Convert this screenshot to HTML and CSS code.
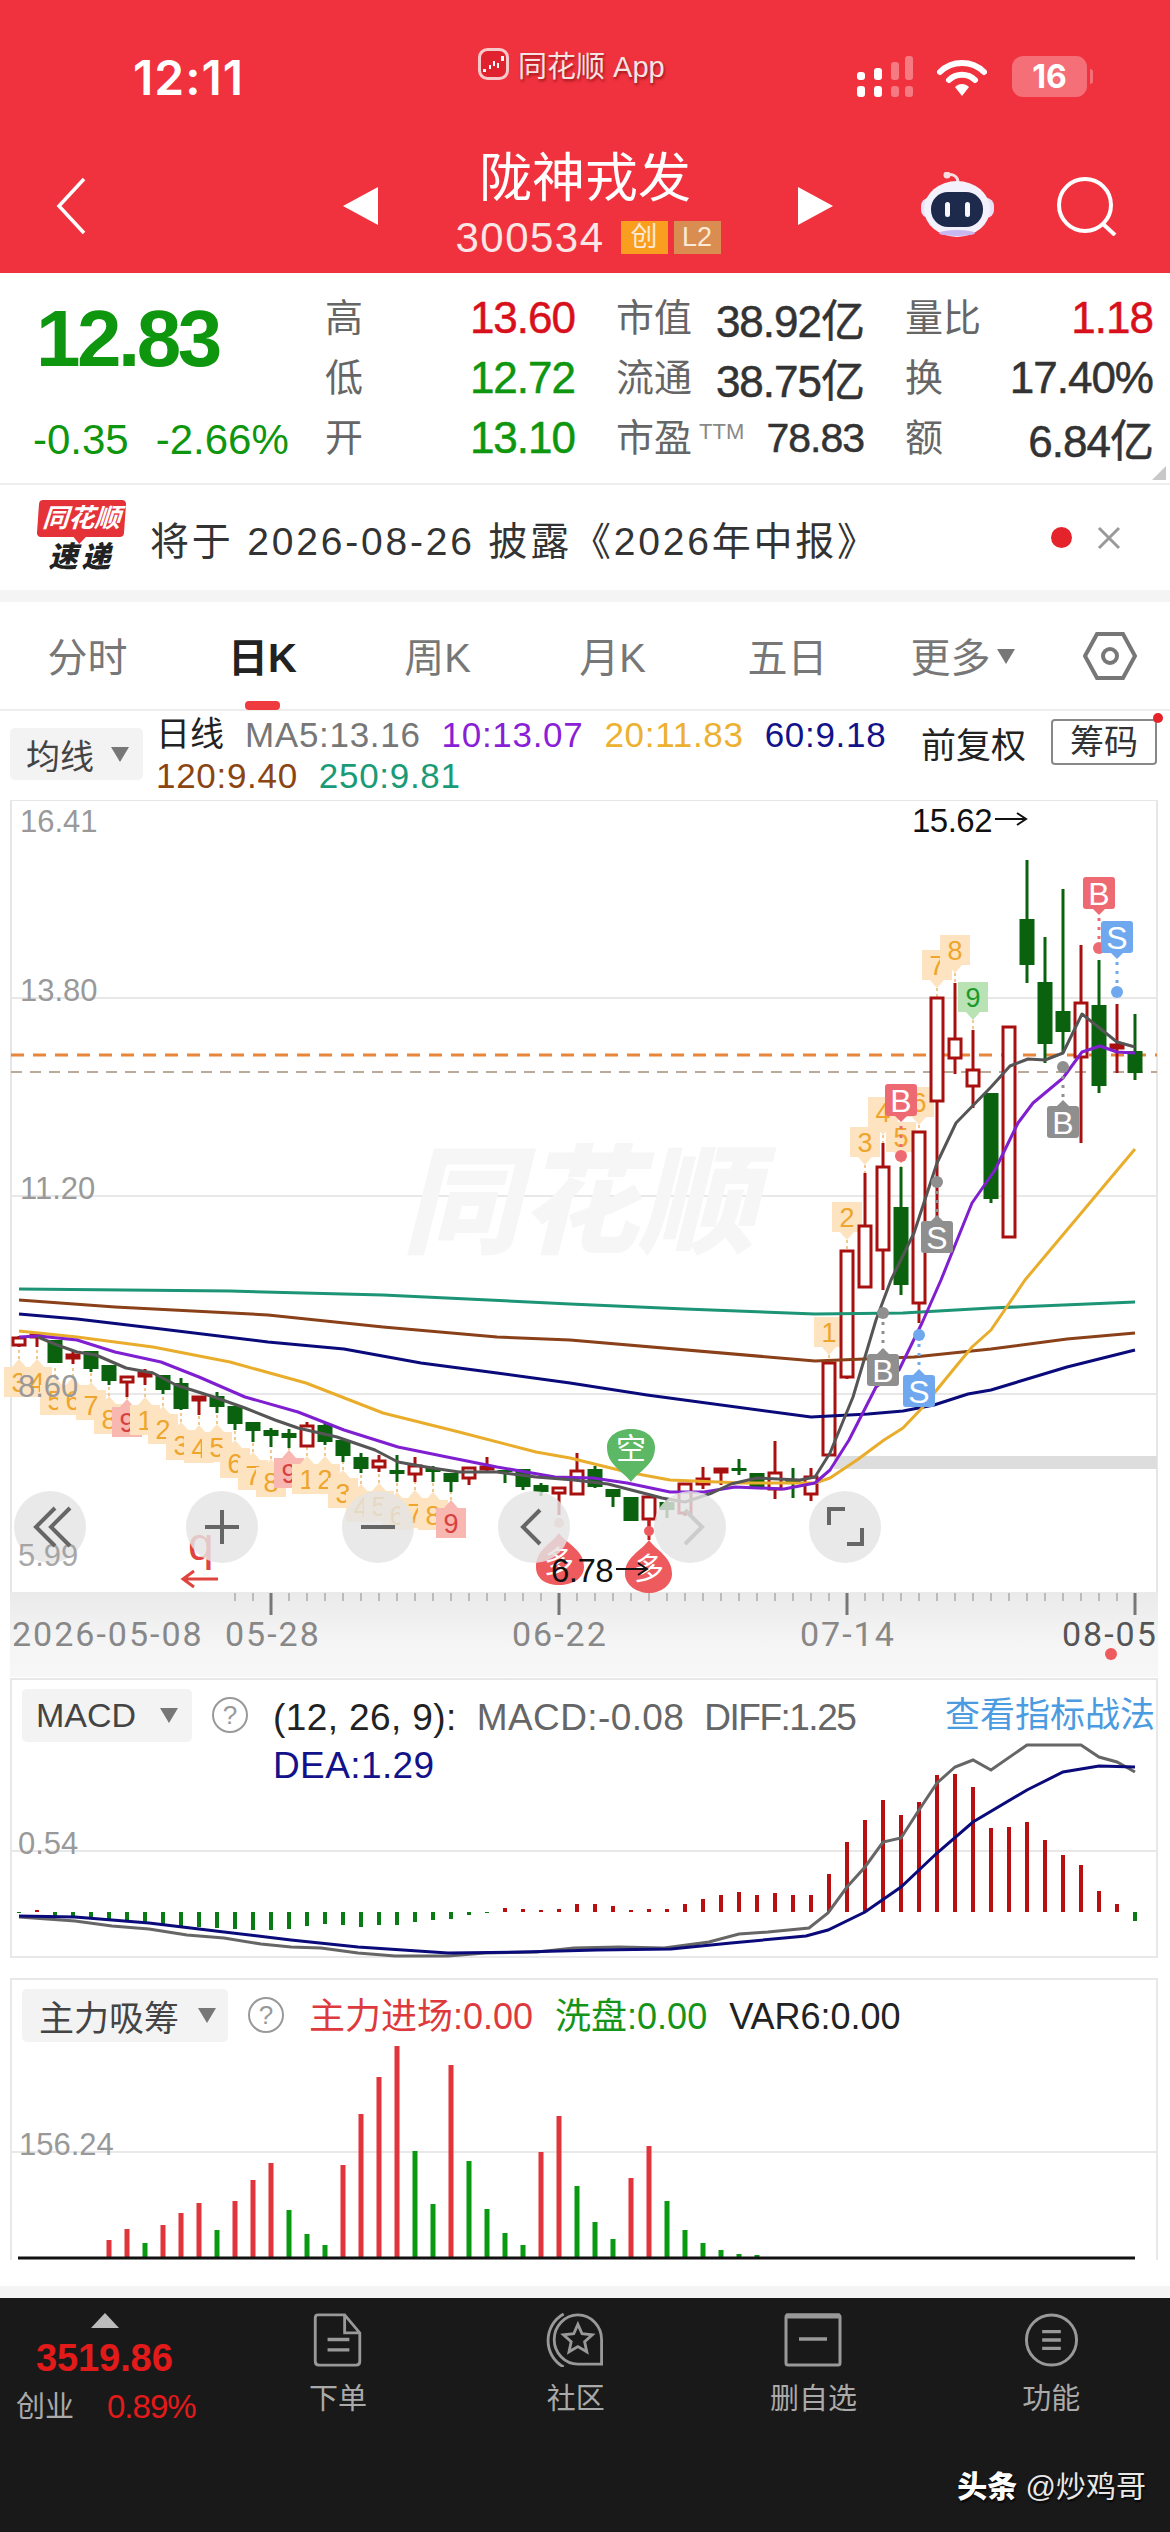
FILE: index.html
```html
<!DOCTYPE html>
<html lang="zh-CN">
<head>
    <meta charset="UTF-8">
    <meta name="viewport" content="width=device-width, initial-scale=1.0">
    <title>陇神戎发 300534</title>
    <link rel="stylesheet" href="styles.css">
</head>
<body>
    <header class="app-header">
        <div class="status-bar">
            <span class="status-time">12:11</span>
            <div class="status-app">
                <svg class="app-logo" width="31" height="32" viewBox="0 0 31 32">
                    <rect x="1.5" y="1.5" width="28" height="29" rx="8" fill="#E0212E" stroke="#F8C9C9" stroke-width="3"/>
                    <path d="M5 21h3v3H5zM11 17h2v4h-2zM15 13h2v5h-2zM19 15h2v5h-2zM23 8h3v5h-3z" fill="#fff"/>
                </svg>
                <span>同花顺 App</span>
            </div>
            <div class="status-icons">
                <svg width="62" height="42" viewBox="0 0 62 42">
                    <g fill="#fff">
                        <rect x="2" y="16" width="8" height="8" rx="3"/>
                        <rect x="2" y="30" width="8" height="11" rx="3"/>
                        <rect x="19" y="12" width="8" height="12" rx="3"/>
                        <rect x="19" y="30" width="8" height="11" rx="3"/>
                    </g>
                    <g fill="#fff" opacity="0.35">
                        <rect x="36" y="6" width="8" height="18" rx="3"/>
                        <rect x="36" y="30" width="8" height="11" rx="3"/>
                        <rect x="50" y="0" width="8" height="24" rx="3"/>
                        <rect x="50" y="30" width="8" height="11" rx="3"/>
                    </g>
                </svg>
                <svg class="wifi" width="50" height="38" viewBox="0 0 50 38">
                    <path d="M3 13C15 1 35 1 47 13" fill="none" stroke="#fff" stroke-width="6" stroke-linecap="round"/>
                    <path d="M12 21C19 14 31 14 38 21" fill="none" stroke="#fff" stroke-width="6" stroke-linecap="round"/>
                    <path d="M18 28C22 24 28 24 32 28L25 37Z" fill="#fff"/>
                </svg>
                <div class="battery"><span>16</span></div>
            </div>
        </div>
        <div class="nav-bar">
            <svg class="nav-back" width="32" height="58" viewBox="0 0 32 58">
                <path d="M29 2L4 29L29 56" fill="none" stroke="#fff" stroke-width="3.5"/>
            </svg>
            <div class="tri tri-left"></div>
            <div class="stock-title">
                <div class="stock-name">陇神戎发</div>
                <div class="stock-code">
                    <span>300534</span>
                    <em class="tag tag-chuang">创</em>
                    <em class="tag tag-l2">L2</em>
                </div>
            </div>
            <div class="tri tri-right"></div>
            <svg class="robot" width="75" height="66" viewBox="0 0 75 66">
                <path d="M27 3C33 1 38 5 38 10" fill="none" stroke="#F6DDE0" stroke-width="3"/>
                <circle cx="27" cy="3" r="3.5" fill="#F6DDE0"/>
                <rect x="1" y="26" width="73" height="20" rx="8" fill="#E8E2F8"/>
                <ellipse cx="37" cy="37" rx="33" ry="28" fill="#F3F1FB"/>
                <ellipse cx="37" cy="61" rx="18" ry="3" fill="#C9B8F0"/>
                <rect x="11" y="20" width="52" height="35" rx="17" fill="#1D2A4C"/>
                <rect x="25" y="30" width="5" height="15" rx="2.5" fill="#F8F6FF"/>
                <rect x="45" y="30" width="5" height="15" rx="2.5" fill="#F8F6FF"/>
            </svg>
            <svg class="search" width="64" height="60" viewBox="0 0 64 60">
                <circle cx="30" cy="29" r="26" fill="none" stroke="#fff" stroke-width="4"/>
                <path d="M48 48L60 59" stroke="#fff" stroke-width="4"/>
            </svg>
        </div>
    </header>

    <section class="quote">
        <div class="quote-price">
            <div class="price">12.83</div>
            <div class="price-change"><span>-0.35</span><span>-2.66%</span></div>
        </div>
        <div class="quote-grid">
            <div class="stat"><label>高</label><b class="up">13.60</b></div>
            <div class="stat"><label>低</label><b class="down">12.72</b></div>
            <div class="stat"><label>开</label><b class="down">13.10</b></div>
            <div class="stat"><label>市值</label><b>38.92亿</b></div>
            <div class="stat"><label>流通</label><b>38.75亿</b></div>
            <div class="stat"><label>市盈<sup>TTM</sup></label><b class="pe">78.83</b></div>
            <div class="stat"><label>量比</label><b class="up">1.18</b></div>
            <div class="stat"><label>换</label><b>17.40%</b></div>
            <div class="stat"><label>额</label><b>6.84亿</b></div>
        </div>
        <div class="quote-corner"></div>
    </section>

    <section class="notice">
        <div class="notice-logo">
            <div class="notice-bubble">同花顺</div>
            <div class="notice-sub">速递</div>
        </div>
        <p class="notice-text">将于 2026-08-26 披露《2026年中报》</p>
        <span class="notice-dot"></span>
        <svg class="notice-close" width="26" height="24" viewBox="0 0 26 24">
            <path d="M3 2L23 22M23 2L3 22" stroke="#999" stroke-width="3"/>
        </svg>
    </section>

    <nav class="tabs">
        <a>分时</a>
        <a class="active">日K</a>
        <a>周K</a>
        <a>月K</a>
        <a>五日</a>
        <a class="tab-more">更多<i class="caret"></i></a>
        <svg class="tab-hex" width="54" height="48" viewBox="0 0 54 48">
            <path d="M2 24L14 2H40L52 24L40 46H14Z" fill="none" stroke="#777" stroke-width="4"/>
            <circle cx="27" cy="24" r="7" fill="none" stroke="#777" stroke-width="4"/>
        </svg>
    </nav>

    <section class="legend-row">
        <div class="select-btn select-ma">均线<i class="caret"></i></div>
        <div class="ma-legend">
            <span class="ma-title">日线</span>
            <span class="c-ma5">MA5:13.16</span>
            <span class="c-ma10">10:13.07</span>
            <span class="c-ma20">20:11.83</span>
            <span class="c-ma60">60:9.18</span>
            <span class="c-ma120">120:9.40</span>
            <span class="c-ma250">250:9.81</span>
        </div>
        <span class="adjust">前复权</span>
        <span class="chips">筹码</span>
    </section>

    <svg class="kline" width="1170" height="877" viewBox="0 800 1170 877">
        <defs>
            <linearGradient id="band" x1="0" y1="0" x2="0" y2="1">
                <stop offset="0" stop-color="#EAEAEA"/>
                <stop offset="0.6" stop-color="#F5F5F5"/>
                <stop offset="1" stop-color="#F7F7F7"/>
            </linearGradient>
        </defs>
        <rect x="0" y="800" width="1170" height="877" fill="#fff"/>
        <rect x="10" y="1592" width="1148" height="85" fill="url(#band)"/>
        <path class="frame" d="M11 1592V800H1157V1592"/>
        <path class="grid-line" d="M11 998H1157M11 1196H1157M11 1394H1157"/>
        <text class="watermark" x="402" y="1244">同花顺</text>
        <rect class="limit-bar" x="834" y="1456" width="323" height="13"/>

        <g id="badges"></g>
        <path class="price-now" d="M11 1055H1157"/>
        <path class="price-prev" d="M11 1072H1157"/>
        <g id="candles"></g>

        <polyline class="ma ma250" points="19,1289 230,1291 383,1295 570,1304 685,1309 815,1314 903,1313 991,1308 1135,1302"/>
        <polyline class="ma ma120" points="19,1300 115,1307 268,1315 383,1327 497,1337 570,1340 815,1361 914,1357 991,1349 1067,1339 1135,1333"/>
        <polyline class="ma ma60" points="19,1314 77,1319 153,1328 268,1342 344,1349 421,1363 497,1373 570,1383 647,1395 811,1417 868,1414 903,1411 934,1405 968,1394 991,1390 1067,1367 1135,1350"/>
        <polyline class="ma ma20" points="19,1331 77,1337 153,1347 230,1362 306,1383 383,1413 459,1432 536,1452 570,1458 627,1472 670,1480 742,1483 815,1483 830,1478 857,1460 884,1440 903,1428 922,1408 953,1370 972,1347 991,1330 1025,1280 1135,1149"/>
        <polyline class="ma ma10" points="19,1337 38,1336 77,1340 115,1352 161,1362 199,1377 245,1397 298,1412 344,1430 398,1447 452,1458 497,1467 555,1477 593,1478 627,1483 670,1492 704,1492 735,1487 784,1489 815,1483 830,1470 849,1440 876,1387 899,1370 922,1323 941,1280 972,1203 995,1170 1018,1123 1033,1103 1063,1078 1082,1052 1100,1046 1117,1052 1135,1053"/>
        <polyline class="ma ma5" points="38,1337 57,1345 77,1352 96,1355 126,1368 153,1373 176,1385 214,1397 245,1408 275,1420 298,1428 337,1437 375,1450 398,1462 432,1468 459,1472 497,1472 536,1477 574,1480 608,1484 643,1493 662,1498 685,1502 712,1493 731,1484 757,1478 800,1480 815,1477 830,1453 853,1397 876,1320 891,1280 914,1233 937,1163 956,1123 991,1087 1010,1066 1028,1059 1045,1060 1063,1053 1082,1014 1117,1042 1135,1047"/>

        <g id="marks"></g>

        <path class="drop drop-green" d="M631 1482C622 1470 607 1465 607 1447C607 1436 618 1429 631 1429C644 1429 655 1436 655 1447C655 1465 640 1470 631 1482Z"/>
        <text class="drop-text" x="631" y="1459">空</text>
        <path class="drop drop-red" d="M559 1533C568 1545 584 1550 584 1567C584 1578 573 1585 559 1585C545 1585 536 1578 536 1567C536 1550 550 1545 559 1533Z"/>
        <text class="drop-text" x="559" y="1572">多</text>
        <path class="drop drop-red" d="M649 1540C658 1552 672 1557 672 1574C672 1585 661 1593 649 1593C637 1593 625 1585 625 1574C625 1557 640 1552 649 1540Z"/>
        <text class="drop-text" x="649" y="1579">多</text>
        <path class="drop-stem" d="M649 1519V1540"/>
        <circle class="dot-red" cx="649" cy="1531" r="5"/>
        <circle class="dot-pink" cx="559" cy="1523" r="5"/>

        <text class="axis-price" x="20" y="832">16.41</text>
        <text class="axis-price" x="20" y="1001">13.80</text>
        <text class="axis-price" x="20" y="1199">11.20</text>
        <text class="axis-price" x="18" y="1397">8.60</text>

        <text class="extreme" x="912" y="832">15.62</text>
        <path class="extreme-arrow" d="M995 819H1025M1017 813L1026 819L1017 825"/>
        <text class="extreme" x="551" y="1582">6.78</text>
        <path class="extreme-arrow" d="M616 1569H646M638 1563L647 1569L638 1575"/>

        <text class="flip-mark" x="188" y="1560">q</text>
        <path class="flip-arrow" d="M183 1579H218M194 1571L183 1579L194 1587"/>

        <circle class="zoom-btn" cx="50" cy="1527" r="36"/>
        <text class="axis-price axis-faded" x="18" y="1566">5.99</text>
        <path class="zoom-icon" d="M55 1508L36 1527L55 1546M70 1508L51 1527L70 1546"/>
        <circle class="zoom-btn" cx="222" cy="1527" r="36"/>
        <path class="zoom-icon" d="M205 1527H239M222 1510V1544"/>
        <circle class="zoom-btn" cx="378" cy="1527" r="36"/>
        <path class="zoom-icon" d="M361 1527H395"/>
        <circle class="zoom-btn" cx="534" cy="1527" r="36"/>
        <path class="zoom-icon" d="M540 1510L523 1527L540 1544"/>
        <circle class="zoom-btn" cx="690" cy="1527" r="36"/>
        <path class="zoom-icon zoom-off" d="M685 1510L702 1527L685 1544"/>
        <circle class="zoom-btn" cx="845" cy="1527" r="36"/>
        <path class="zoom-icon" d="M845 1509H829V1525M862 1528V1544H847"/>

        <g id="ticks"></g>
        <text class="axis-date" x="12" y="1646">2026-05-08</text>
        <text class="axis-date" x="225" y="1646">05-28</text>
        <text class="axis-date" x="512" y="1646">06-22</text>
        <text class="axis-date" x="800" y="1646">07-14</text>
        <text class="axis-date axis-date-last" x="1062" y="1646">08-05</text>
        <circle class="dot-red" cx="1111" cy="1654" r="6"/>
    </svg>

    <section class="panel panel-macd">
        <svg class="panel-chart" width="1148" height="280" viewBox="10 1678 1148 280">
            <path class="grid-line" d="M10 1851H1158"/>
            <text class="axis-price" x="18" y="1854">0.54</text>
            <g id="macd-bars"></g>
            <polyline class="line-diff" points="19,1917 75,1921 112,1926 149,1929 187,1935 224,1938 261,1944 291,1947 321,1948 358,1953 395,1956 448,1956 485,1953 537,1952 574,1948 619,1947 664,1948 709,1942 739,1934 768,1932 809,1928 828,1913 847,1887 865,1867 883,1842 901,1838 919,1810 937,1783 955,1767 973,1760 991,1770 1027,1745 1081,1745 1099,1757 1117,1762 1135,1772"/>
            <polyline class="line-dea" points="19,1916 75,1917 149,1923 224,1932 291,1940 358,1947 448,1953 522,1952 597,1950 671,1949 731,1943 806,1936 828,1930 865,1912 901,1887 937,1853 973,1822 1027,1790 1063,1772 1099,1766 1135,1767"/>
        </svg>
        <div class="panel-head">
            <div class="select-btn select-macd">MACD<i class="caret"></i></div>
            <span class="help">?</span>
            <div class="panel-legend legend-macd">
                <span class="c-black">(12, 26, 9):</span>
                <span class="c-gray">MACD:-0.08</span>
                <span class="c-gray legend-diff">DIFF:1.25</span>
                <span class="c-ma60">DEA:1.29</span>
            </div>
            <a class="panel-link">查看指标战法</a>
        </div>
    </section>

    <section class="panel panel-main">
        <svg class="panel-chart" width="1148" height="282" viewBox="10 1978 1148 282">
            <path class="grid-line" d="M10 2152H1158"/>
            <text class="axis-price" x="19" y="2155">156.24</text>
            <g id="flow-bars"></g>
            <path class="flow-base" d="M18 2258H1135"/>
        </svg>
        <div class="panel-head">
            <div class="select-btn select-main">主力吸筹<i class="caret"></i></div>
            <span class="help">?</span>
            <div class="panel-legend legend-main">
                <span class="c-flow-red">主力进场:0.00</span>
                <span class="c-flow-green">洗盘:0.00</span>
                <span class="c-black">VAR6:0.00</span>
            </div>
        </div>
    </section>

    <div class="page-gap"></div>

    <footer class="bottom-bar">
        <div class="bottom-nav">
            <div class="index-box">
                <i class="index-arrow"></i>
                <div class="index-value">3519.86</div>
                <div class="index-row"><span>创业</span><b>0.89%</b></div>
            </div>
            <a class="nav-item">
                <svg width="52" height="57" viewBox="0 0 52 57">
                    <path d="M5 2H33L49 21V51Q49 55 45 55H6Q2 55 2 51V5Q2 2 5 2ZM33 2V21H49" fill="none" stroke="#999" stroke-width="3"/>
                    <path d="M15 28H38M15 39H38" stroke="#999" stroke-width="3.5"/>
                </svg>
                <span>下单</span>
            </a>
            <a class="nav-item">
                <svg width="62" height="57" viewBox="0 0 62 57">
                    <path d="M18 1C-4 13 -4 45 18 57" fill="none" stroke="#999" stroke-width="3"/>
                    <path d="M58 54H33C19 54 8 42 8 28C8 14 19 2 33 2C47 2 58 14 58 28Z" fill="none" stroke="#999" stroke-width="3"/>
                    <path d="M33 12L37.4 21.9L48.2 23L40.1 30.3L42.4 41L33 35.5L23.6 41L25.9 30.3L17.8 23L28.6 21.9Z" fill="none" stroke="#999" stroke-width="3"/>
                </svg>
                <span>社区</span>
            </a>
            <a class="nav-item">
                <svg width="58" height="54" viewBox="0 0 58 54">
                    <rect x="2" y="2" width="54" height="50" rx="2" fill="none" stroke="#999" stroke-width="3"/>
                    <path d="M2 3H56" stroke="#999" stroke-width="5"/>
                    <path d="M15 26H43" stroke="#999" stroke-width="3.5"/>
                </svg>
                <span>删自选</span>
            </a>
            <a class="nav-item">
                <svg width="55" height="55" viewBox="0 0 55 55">
                    <circle cx="27.5" cy="27.5" r="25.5" fill="none" stroke="#999" stroke-width="3"/>
                    <path d="M18 19H37M18 27.5H37M18 36H37" stroke="#999" stroke-width="3.5"/>
                </svg>
                <span>功能</span>
            </a>
        </div>
        <div class="brand"><b>头条</b> @炒鸡哥</div>
    </footer>

    <script src="chart.js"></script>
</body>
</html>
```

FILE: styles.css
```css
* {
    box-sizing: border-box;
}

body {
    margin: 0;
    width: 1170px;
    height: 2532px;
    overflow: hidden;
    background-color: #FFFFFF;
    color: #333333;
    font-family: 'Liberation Sans', 'Noto Sans CJK SC', sans-serif;
}

svg {
    display: block;
}

i, em {
    font-style: normal;
}

/* header */
.app-header {
    height: 273px;
    background-color: #F0323E;
    color: #FFFFFF;
}

.status-bar {
    height: 125px;
    padding-left: 133px;
    display: grid;
    grid-template-columns: 345px 377px 1fr;
}

.status-time {
    font-family: Inter, sans-serif;
    font-size: 48px;
    font-weight: 600;
    letter-spacing: 1px;
    line-height: 56px;
    margin-top: 50px;
}

.status-app {
    display: flex;
    gap: 9px;
    margin-top: 48px;
    height: 32px;
    align-items: center;
    font-size: 29px;
    color: #F4E4E4;
    text-shadow: 1px 2px 3px rgba(90, 0, 0, 0.6);
}

.status-icons {
    display: flex;
    align-items: flex-start;
    margin-top: 56px;
}

.wifi {
    margin-left: 20px;
    margin-top: 3px;
}

.battery {
    position: relative;
    width: 75px;
    height: 41px;
    margin-left: 25px;
    border-radius: 11px;
    background-color: rgba(255, 255, 255, 0.3);
    text-align: center;
    font-family: Inter, sans-serif;
    font-size: 32px;
    font-weight: 700;
    line-height: 41px;
}

.battery::after {
    content: '';
    position: absolute;
    right: -6px;
    top: 13px;
    width: 3px;
    height: 15px;
    border-radius: 0 3px 3px 0;
    background-color: rgba(255, 255, 255, 0.3);
}

.nav-bar {
    height: 148px;
    padding: 14px 0 0 55px;
    display: flex;
    align-items: center;
}

.tri {
    width: 0;
    height: 0;
    border-top: 19px solid transparent;
    border-bottom: 19px solid transparent;
}

.tri-left {
    margin-left: 256px;
    border-right: 35px solid #FFFFFF;
}

.tri-right {
    border-left: 35px solid #FFFFFF;
}

.stock-title {
    width: 420px;
    text-align: center;
    margin-top: -14px;
}

.stock-name {
    font-size: 53px;
    line-height: 72px;
    margin-left: -6px;
}

.stock-code {
    display: flex;
    justify-content: center;
    align-items: center;
    gap: 6px;
    margin-top: 5px;
    color: #FBE6E6;
    font-size: 42px;
    letter-spacing: 1.5px;
    line-height: 36px;
}

.stock-code span {
    margin-right: 10px;
}

.tag {
    width: 47px;
    height: 33px;
    color: #FCE9D6;
    font-size: 27px;
    line-height: 33px;
    letter-spacing: 0;
}

.tag-chuang {
    background-color: #F99E1E;
}

.tag-l2 {
    background-color: #DA8D50;
}

.robot {
    margin-left: 87px;
    margin-top: -2px;
}

.search {
    margin-left: 60px;
}

/* quote */
.quote {
    position: relative;
    height: 210px;
    padding: 15px 0 0 33px;
    display: flex;
}

.quote-price {
    width: 292px;
}

.price {
    margin-left: 3px;
    color: #0F960F;
    font-size: 80px;
    font-weight: 700;
    letter-spacing: -3.5px;
    line-height: 80px;
    margin-top: 11px;
}

.price-change {
    display: flex;
    gap: 27px;
    margin-top: 38px;
    color: #0F960F;
    font-size: 42px;
    line-height: 46px;
}

.quote-grid {
    display: grid;
    grid-template-columns: 250px 248px 248px;
    grid-template-rows: repeat(3, 60px);
    grid-auto-flow: column;
    column-gap: 41px;
}

.stat {
    display: flex;
    justify-content: space-between;
    align-items: center;
}

.stat label {
    margin-top: -7px;
    color: #666666;
    font-size: 38px;
}

.stat sup {
    margin-left: 7px;
    font-size: 22px;
    vertical-align: 12px;
    line-height: 0;
    color: #888888;
}

.stat b {
    color: #333333;
    font-size: 44px;
    font-weight: 400;
    letter-spacing: -1px;
    -webkit-text-stroke: 0.5px currentColor;
}

.stat b.pe {
    font-size: 41px;
}

.stat b.up {
    color: #D8101C;
}

.stat b.down {
    color: #0F960F;
}

.quote-corner {
    position: absolute;
    right: 4px;
    bottom: 3px;
    width: 0;
    height: 0;
    border-bottom: 14px solid #C8C8C8;
    border-left: 14px solid transparent;
}

/* notice */
.notice {
    height: 107px;
    padding: 0 48px 0 38px;
    border-top: 2px solid #EEEEEE;
    display: flex;
    align-items: center;
}

.notice-logo {
    width: 87px;
    text-align: center;
}

.notice-bubble {
    position: relative;
    height: 37px;
    background-color: #E53238;
    border-radius: 4px;
    color: #FFFFFF;
    font-size: 26px;
    font-weight: 700;
    font-style: italic;
    line-height: 37px;
    transform: skewX(-4deg);
}

.notice-bubble::after {
    content: '';
    position: absolute;
    left: 36px;
    bottom: -7px;
    border-top: 8px solid #E53238;
    border-left: 7px solid transparent;
    border-right: 7px solid transparent;
}

.notice-sub {
    color: #222222;
    font-size: 29px;
    font-weight: 900;
    font-style: italic;
    letter-spacing: 4px;
    line-height: 36px;
    margin-top: 2px;
}

.notice-text {
    flex: 1;
    margin: 0 0 0 25px;
    color: #333333;
    font-size: 39px;
    letter-spacing: 2.8px;
    white-space: nowrap;
}

.notice-dot {
    width: 21px;
    height: 21px;
    border-radius: 50%;
    background-color: #E4232B;
}

.notice-close {
    margin-left: 24px;
}

/* tabs */
.tabs {
    height: 121px;
    border-top: 12px solid #F4F4F4;
    border-bottom: 2px solid #EEEEEE;
    display: flex;
    align-items: center;
}

.tabs a {
    position: relative;
    width: 175px;
    height: 107px;
    padding-top: 28px;
    text-align: center;
    color: #777777;
    font-size: 40px;
    line-height: 56px;
}

.tabs a.active {
    color: #222222;
    font-weight: 700;
}

.tabs a.active::after {
    content: '';
    position: absolute;
    left: 70px;
    bottom: -1px;
    width: 35px;
    height: 9px;
    border-radius: 4px;
    background-color: #EF3B3F;
}

.tab-hex {
    margin-left: 33px;
    margin-top: 1px;
}

.caret {
    display: inline-block;
    width: 0;
    height: 0;
    border-top: 15px solid #777777;
    border-left: 9px solid transparent;
    border-right: 9px solid transparent;
}

.tab-more .caret {
    margin-left: 6px;
    vertical-align: 8px;
}

/* legend */
.legend-row {
    position: relative;
    height: 89px;
    display: flex;
    align-items: flex-start;
}

.select-btn {
    background-color: #F3F3F3;
    border-radius: 5px;
    color: #444444;
    display: flex;
    align-items: center;
    justify-content: space-between;
    font-size: 34px;
}

.select-ma {
    width: 133px;
    height: 52px;
    margin: 17px 0 0 10px;
    padding: 0 14px 0 16px;
}

.ma-legend {
    width: 745px;
    margin-left: 13px;
    display: flex;
    flex-wrap: wrap;
    column-gap: 21px;
    font-size: 35px;
    letter-spacing: 0.7px;
    line-height: 41px;
    padding-top: 3px;
}

.ma-title {
    color: #222222;
    font-size: 34px;
    letter-spacing: 0;
}

.c-ma5 { color: #777777; }
.c-ma10 { color: #8A1FD8; }
.c-ma20 { color: #EDB02F; }
.c-ma60 { color: #12128A; }
.c-ma120 { color: #8B4513; }
.c-ma250 { color: #1A9B78; }
.c-black { color: #222222; }
.c-gray { color: #666666; }
.c-flow-red { color: #DD3A3E; }
.c-flow-green { color: #16941A; }

.adjust {
    margin: 13px 0 0 20px;
    color: #222222;
    font-size: 35px;
    line-height: 44px;
}

.chips {
    width: 106px;
    height: 46px;
    margin: 8px 0 0 25px;
    border: 2px solid #888888;
    border-radius: 4px;
    text-align: center;
    color: #333333;
    font-size: 34px;
    line-height: 42px;
}

.chips::after {
    content: '';
    position: absolute;
    right: 7px;
    top: 2px;
    width: 10px;
    height: 10px;
    border-radius: 50%;
    background-color: #E4232B;
}

/* k line chart */
.frame {
    fill: none;
    stroke: #E6E6E6;
    stroke-width: 2;
}

.grid-line {
    fill: none;
    stroke: #E8E8E8;
    stroke-width: 2;
}

.watermark {
    fill: #F6F6F6;
    font-size: 118px;
    font-weight: 900;
    font-style: italic;
}

.limit-bar {
    fill: #DDDDDD;
}

.price-now {
    fill: none;
    stroke: #E8863A;
    stroke-width: 3;
    stroke-dasharray: 13 9;
}

.price-prev {
    fill: none;
    stroke: #BBAA9A;
    stroke-width: 2;
    stroke-dasharray: 11 8;
}

.ma {
    fill: none;
    stroke-width: 3;
    stroke-linejoin: round;
}

.ma5 { stroke: #555555; }
.ma10 { stroke: #7F1FD0; }
.ma20 { stroke: #E9AD2B; }
.ma60 { stroke: #0A0A7A; }
.ma120 { stroke: #8A4018; }
.ma250 { stroke: #1C9475; }

.wick-red { stroke: #A81010; stroke-width: 3; }
.wick-green { stroke: #0A620F; stroke-width: 3; }
.body-red { fill: #FFFFFF; stroke: #A81010; stroke-width: 3; }
.body-green { fill: #0A620F; }

.badge-orange { fill: #FDE3C0; }
.badge-pink { fill: #F8B7B0; }
.badge-green { fill: #B9E2B5; }

.badge-text {
    text-anchor: middle;
    font-size: 27px;
    fill: #EFA52C;
}

.badge-text-pink { fill: #D8403F; }
.badge-text-green { fill: #1A9A2A; }

.badge-link {
    fill: none;
    stroke: #EFC98F;
    stroke-width: 2;
    stroke-dasharray: 3 3;
}

.mark-text {
    text-anchor: middle;
    fill: #FFFFFF;
    font-size: 32px;
}

.mark-link {
    fill: none;
    stroke-width: 3;
    stroke-dasharray: 3 6;
}

.drop-green { fill: #5DB866; }
.drop-red { fill: #EE5B5F; }
.drop-stem { stroke: #C21A1A; stroke-width: 3; }
.dot-red { fill: #EE5B5F; }
.dot-pink { fill: #F4B8B8; }

.drop-text {
    text-anchor: middle;
    fill: #FFFFFF;
    font-size: 30px;
}

.axis-price {
    fill: #999999;
    font-size: 31px;
}

.axis-faded {
    opacity: 0.85;
}

.extreme {
    fill: #111111;
    font-size: 33px;
    letter-spacing: -0.5px;
}

.extreme-arrow {
    fill: none;
    stroke: #111111;
    stroke-width: 2;
}

.flip-mark {
    fill: #E0443F;
    font-size: 46px;
}

.flip-arrow {
    fill: none;
    stroke: #E0443F;
    stroke-width: 3;
}

.zoom-btn {
    fill: rgba(228, 228, 228, 0.82);
}

.zoom-icon {
    fill: none;
    stroke: #666666;
    stroke-width: 4;
}

.zoom-off {
    stroke: #CCCCCC;
}

.tick {
    stroke: #BBBBBB;
    stroke-width: 2;
}

.tick-major {
    stroke: #777777;
    stroke-width: 3;
}

.axis-date {
    fill: #888888;
    font-family: Roboto, sans-serif;
    font-size: 34px;
    letter-spacing: 2px;
}

.axis-date-last {
    fill: #555555;
}

/* sub panels */
.panel {
    position: relative;
    width: 1148px;
    margin-left: 10px;
    border: 2px solid #E8E8E8;
}

.panel-macd {
    height: 280px;
    margin-top: 1px;
}

.panel-main {
    height: 282px;
    margin-top: 20px;
    border-bottom: none;
}

.panel-chart {
    position: absolute;
    left: -2px;
    top: -2px;
}

.panel-head {
    position: relative;
    display: flex;
    align-items: flex-start;
    padding: 9px 0 0 10px;
}

.select-macd {
    width: 170px;
    height: 53px;
    padding: 0 14px;
    font-size: 34px;
}

.select-main {
    width: 206px;
    height: 53px;
    padding: 0 12px 0 17px;
    font-size: 35px;
}

.help {
    width: 36px;
    height: 36px;
    margin: 8px 0 0 20px;
    border: 2px solid #999999;
    border-radius: 50%;
    text-align: center;
    color: #999999;
    font-size: 26px;
    line-height: 32px;
}

.panel-legend {
    display: flex;
    flex-wrap: wrap;
    column-gap: 20px;
}

.legend-macd {
    width: 668px;
    margin: 5px 0 0 25px;
    font-size: 37px;
    letter-spacing: 0.4px;
    line-height: 48px;
}

.legend-diff {
    letter-spacing: -1.5px;
}

.legend-main {
    margin: 7px 0 0 25px;
    font-size: 36px;
    line-height: 42px;
    column-gap: 22px;
}

.panel-link {
    margin: 5px 0 0 4px;
    color: #4A9BE0;
    font-size: 35px;
    line-height: 42px;
    white-space: nowrap;
}

.line-diff {
    fill: none;
    stroke: #666666;
    stroke-width: 3;
}

.line-dea {
    fill: none;
    stroke: #0A0A7A;
    stroke-width: 3;
}

.macd-up { fill: #B81010; }
.macd-down { fill: #0A7A14; }
.flow-up { fill: #E0353A; }
.flow-down { fill: #089A10; }

.flow-base {
    fill: none;
    stroke: #111111;
    stroke-width: 3;
}

.page-gap {
    height: 38px;
    background: linear-gradient(#FFFFFF 26px, #F4F4F4 26px);
}

/* bottom bar */
.bottom-bar {
    height: 234px;
    background-color: #191919;
}

.bottom-nav {
    display: flex;
    padding: 15px 0 0 16px;
}

.index-box {
    width: 205px;
}

.index-arrow {
    display: block;
    width: 0;
    height: 0;
    margin-left: 75px;
    border-bottom: 15px solid #BBBBBB;
    border-left: 14px solid transparent;
    border-right: 14px solid transparent;
}

.index-value {
    margin: 10px 0 0 20px;
    color: #E31A1A;
    font-size: 38px;
    font-weight: 700;
    letter-spacing: -0.1px;
    line-height: 40px;
}

.index-row {
    display: flex;
    align-items: center;
    gap: 33px;
    margin-top: 11px;
    color: #AAAAAA;
    font-size: 29px;
    line-height: 36px;
}

.index-row b {
    color: #E31A1A;
    font-size: 33px;
    font-weight: 400;
    letter-spacing: -1px;
}

.nav-item {
    width: 240px;
    height: 102px;
    display: flex;
    flex-direction: column;
    align-items: center;
    color: #AAAAAA;
    font-size: 29px;
}

.nav-item svg {
    height: 57px;
}

.nav-item span {
    margin-top: 16px;
    line-height: 32px;
}

.brand {
    margin-top: 44px;
    padding-right: 24px;
    text-align: right;
    color: #E8E8E8;
    font-size: 30px;
    line-height: 36px;
    text-shadow: 1px 2px 2px rgba(0, 0, 0, 0.8);
}

.brand b {
    color: #FFFFFF;
    font-weight: 900;
}
```

FILE: chart.js
```js
const SVG_NS = 'http://www.w3.org/2000/svg';
const STEP = 18;
const X0 = 19;

// r = hollow red, g = filled green: [type, bodyTop, bodyBottom, wickTop, wickBottom]
const candles = [
    ['r', 1338, 1345, 1336, 1347], ['r', 1335, 1337, 1334, 1347], ['g', 1340, 1363, 1340, 1363],
    ['r', 1355, 1358, 1351, 1364], ['g', 1351, 1369, 1351, 1372], ['g', 1365, 1381, 1365, 1385],
    ['r', 1377, 1382, 1377, 1397], ['r', 1373, 1376, 1369, 1385], ['g', 1375, 1390, 1375, 1394],
    ['g', 1383, 1409, 1378, 1410], ['r', 1397, 1400, 1397, 1415], ['g', 1396, 1407, 1392, 1413],
    ['g', 1406, 1424, 1406, 1430], ['g', 1422, 1431, 1422, 1442], ['g', 1430, 1436, 1428, 1447],
    ['g', 1433, 1438, 1429, 1448], ['r', 1426, 1446, 1422, 1446], ['g', 1425, 1442, 1422, 1445],
    ['g', 1440, 1456, 1440, 1462], ['g', 1457, 1469, 1453, 1473], ['r', 1461, 1467, 1455, 1472],
    ['g', 1470, 1474, 1455, 1482], ['r', 1466, 1474, 1457, 1482], ['g', 1468, 1472, 1466, 1482],
    ['g', 1473, 1482, 1473, 1492], ['r', 1468, 1478, 1468, 1485], ['r', 1467, 1469, 1457, 1471],
    ['g', 1470, 1472, 1470, 1483], ['g', 1469, 1487, 1469, 1490], ['g', 1485, 1492, 1483, 1496],
    ['r', 1488, 1493, 1488, 1515], ['r', 1471, 1494, 1453, 1495], ['g', 1469, 1487, 1466, 1488],
    ['g', 1489, 1497, 1489, 1507], ['g', 1497, 1521, 1497, 1521], ['r', 1497, 1519, 1497, 1533],
    ['g', 1502, 1510, 1498, 1518], ['r', 1484, 1513, 1484, 1516], ['r', 1479, 1484, 1467, 1489],
    ['r', 1469, 1472, 1469, 1485], ['g', 1468, 1471, 1459, 1475], ['g', 1473, 1489, 1473, 1489],
    ['r', 1473, 1489, 1441, 1499], ['g', 1479, 1484, 1468, 1498], ['r', 1477, 1494, 1468, 1501],
    ['r', 1363, 1455, 1363, 1455], ['r', 1251, 1377, 1251, 1379], ['r', 1226, 1287, 1173, 1287],
    ['r', 1167, 1250, 1143, 1290], ['g', 1207, 1285, 1167, 1295], ['r', 1132, 1303, 1132, 1323],
    ['r', 998, 1101, 998, 1230], ['r', 1039, 1058, 983, 1074], ['r', 1070, 1086, 1030, 1108],
    ['g', 1093, 1199, 1093, 1203], ['r', 1027, 1237, 1027, 1237], ['g', 919, 965, 860, 983],
    ['g', 982, 1044, 937, 1063], ['g', 1011, 1032, 889, 1053], ['r', 1003, 1057, 945, 1143],
    ['g', 1005, 1086, 960, 1093], ['r', 1045, 1048, 1004, 1073], ['g', 1051, 1073, 1014, 1080]
];

// [candle index, number, centre y, kind, pointer] pointer: -1 up, 1 down
const badges = [
    [0, 3, 1382, 'o', -1], [1, 4, 1382, 'o', -1], [2, 5, 1400, 'o', -1], [3, 6, 1400, 'o', -1],
    [4, 7, 1405, 'o', -1], [5, 8, 1419, 'o', -1], [6, 9, 1422, 'p', -1], [7, 1, 1420, 'o', -1],
    [8, 2, 1429, 'o', -1], [9, 3, 1445, 'o', -1], [10, 4, 1448, 'o', -1], [11, 5, 1447, 'o', -1],
    [12, 6, 1463, 'o', -1], [13, 7, 1475, 'o', -1], [14, 8, 1482, 'o', -1], [15, 9, 1473, 'p', -1],
    [16, 1, 1479, 'o', -1], [17, 2, 1479, 'o', -1], [18, 3, 1493, 'o', -1], [19, 4, 1507, 'o', -1],
    [20, 5, 1506, 'o', -1], [21, 6, 1515, 'o', -1], [22, 7, 1513, 'o', -1], [23, 8, 1515, 'o', -1],
    [24, 9, 1523, 'p', -1],
    [45, 1, 1332, 'o', 1], [46, 2, 1217, 'o', 1], [47, 3, 1142, 'o', 1], [48, 4, 1112, 'o', 1],
    [50, 6, 1102, 'o', 1], [49, 5, 1137, 'o', 1], [51, 7, 965, 'o', 1], [52, 8, 950, 'o', 1],
    [53, 9, 997, 'g', 1]
];

// [x, letter, box top, dot y, colour]
const marks = [
    [901, 'B', 1084, 1156, '#EE6A72'], [937, 'S', 1221, 1182, '#8F8F8F'],
    [1063, 'B', 1106, 1067, '#8F8F8F'], [1099, 'B', 877, 948, '#EE6A72'],
    [1117, 'S', 921, 992, '#6FA8EE'], [883, 'B', 1354, 1313, '#8F8F8F'],
    [919, 'S', 1375, 1335, '#6FA8EE']
];

const macd = [
    -1, 2, -5, -6, -7, -9, -10, -12, -12, -14, -15, -16, -17, -18, -18, -17, -14, -12, -13, -15, -13,
    -13, -10, -8, -7, -3, -1, 4, 3, 2, 3, 8, 8, 6, 2, 3, 3, 8, 13, 17, 20, 17, 19, 17, 17, 38, 70, 92,
    112, 97, 110, 137, 138, 125, 84, 85, 90, 72, 57, 47, 21, 8, -9
];

// [candle index, height, red?]
const flow = [
    [5, 18, 1], [6, 29, 1], [7, 15, 0], [8, 33, 1], [9, 45, 1], [10, 55, 1], [11, 28, 0], [12, 57, 1],
    [13, 78, 1], [14, 95, 1], [15, 48, 0], [16, 24, 0], [17, 13, 0], [18, 93, 1], [19, 144, 1],
    [20, 181, 1], [21, 212, 1], [22, 107, 0], [23, 54, 0], [24, 193, 1], [25, 97, 0], [26, 49, 0],
    [27, 25, 0], [28, 13, 0], [29, 106, 1], [30, 142, 1], [31, 72, 0], [32, 36, 0], [33, 19, 0],
    [34, 80, 1], [35, 112, 1], [36, 57, 0], [37, 28, 0], [38, 15, 0], [39, 8, 0], [40, 4, 0], [41, 3, 0]
];

function add(parent, tag, attrs, text) {
    const node = document.createElementNS(SVG_NS, tag);
    for (const key in attrs) {
        node.setAttribute(key, attrs[key]);
    }
    if (text !== undefined) node.textContent = text;
    parent.appendChild(node);
    return node;
}

function drawCandles() {
    const layer = document.getElementById('candles');
    candles.forEach(([type, top, bottom, high, low], i) => {
        const x = X0 + STEP * i;
        const wick = type === 'r' ? 'wick-red' : 'wick-green';
        add(layer, 'line', { class: wick, x1: x, x2: x, y1: high, y2: low });
        if (type === 'r') {
            add(layer, 'rect', { class: 'body-red', x: x - 6, y: top, width: 12, height: bottom - top });
        } else {
            add(layer, 'rect', { class: 'body-green', x: x - 7.5, y: top, width: 15, height: bottom - top });
        }
    });
}

function drawBadges() {
    const layer = document.getElementById('badges');
    const names = { o: '', p: ' badge-text-pink', g: ' badge-text-green' };
    const fills = { o: 'badge-orange', p: 'badge-pink', g: 'badge-green' };
    for (const [i, num, y, kind, dir] of badges) {
        const x = X0 + STEP * i;
        const tip = y + dir * 23;
        const side = y + dir * 15;
        add(layer, 'path', {
            class: fills[kind],
            d: `M${x - 15} ${y - 15}H${x + 15}V${y + 15}H${x - 15}ZM${x - 7} ${side}L${x} ${tip}L${x + 7} ${side}Z`
        });
        add(layer, 'path', { class: 'badge-link', d: `M${x} ${tip}V${tip + dir * 10}` });
        add(layer, 'text', { class: 'badge-text' + names[kind], x, y: y + 10 }, num);
    }
}

function drawMarks() {
    const layer = document.getElementById('marks');
    for (const [x, letter, top, dotY, color] of marks) {
        const above = dotY < top;
        const edge = above ? top : top + 32;
        const tip = above ? top - 6 : top + 38;
        add(layer, 'path', { class: 'mark-link', stroke: color, d: `M${x} ${dotY}V${edge}` });
        add(layer, 'circle', { cx: x, cy: dotY, r: 6, fill: color });
        add(layer, 'rect', { x: x - 16, y: top, width: 32, height: 32, rx: 3, fill: color });
        add(layer, 'path', { d: `M${x - 6} ${edge}L${x} ${tip}L${x + 6} ${edge}Z`, fill: color });
        add(layer, 'text', { class: 'mark-text', x, y: top + 28 }, letter);
    }
}

function drawTicks() {
    const layer = document.getElementById('ticks');
    for (let i = 12; i < candles.length; i++) {
        const x = X0 + STEP * i;
        const major = [14, 30, 46, 62].includes(i);
        add(layer, 'line', {
            class: major ? 'tick tick-major' : 'tick',
            x1: x, x2: x, y1: 1593, y2: major ? 1615 : 1601
        });
    }
}

function drawMacd() {
    const layer = document.getElementById('macd-bars');
    macd.forEach((value, i) => {
        const x = X0 + STEP * i;
        const up = value > 0;
        add(layer, 'rect', {
            class: up ? 'macd-up' : 'macd-down',
            x: x - 2, y: up ? 1912 - value : 1912, width: 4, height: Math.abs(value)
        });
    });
}

function drawFlow() {
    const layer = document.getElementById('flow-bars');
    for (const [i, height, red] of flow) {
        add(layer, 'rect', {
            class: red ? 'flow-up' : 'flow-down',
            x: X0 + STEP * i - 2.5, y: 2258 - height, width: 5, height
        });
    }
}

drawBadges();
drawCandles();
drawMarks();
drawTicks();
drawMacd();
drawFlow();
```
